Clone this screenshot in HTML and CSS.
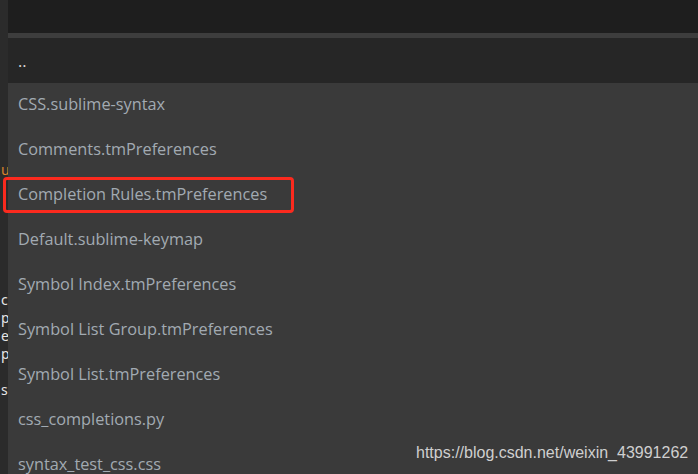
FILE: index.html
```html
<!DOCTYPE html>
<html>
<head>
<meta charset="utf-8">
<link rel="stylesheet" href="styles.css">
</head>
<body>
<div class="app">
  <div class="gutter">
    <div class="g-orange">u</div>
    <div class="g-group">
      <div>c</div>
      <div>p</div>
      <div>e</div>
      <div>p</div>
      <div>&nbsp;</div>
      <div>s</div>
    </div>
  </div>
  <div class="main">
    <div class="topbar"></div>
    <div class="sep"></div>
    <div class="row header">..</div>
    <div class="row">CSS.sublime-syntax</div>
    <div class="row">Comments.tmPreferences</div>
    <div class="row marked">Completion Rules.tmPreferences<span class="mark"></span></div>
    <div class="row">Default.sublime-keymap</div>
    <div class="row">Symbol Index.tmPreferences</div>
    <div class="row">Symbol List Group.tmPreferences</div>
    <div class="row">Symbol List.tmPreferences</div>
    <div class="row">css_completions.py</div>
    <div class="row">syntax_test_css.css</div>
  </div>
</div>
<div class="watermark">https://blog.csdn.net/weixin_43991262</div>
</body>
</html>
```
FILE: styles.css
```css
html, body {
  margin: 0;
  padding: 0;
  background: #3a3a3a;
  overflow: hidden;
}
.app {
  display: flex;
  height: 474px;
}
.gutter {
  width: 8px;
  flex: none;
  background: #2b2b2b;
  overflow: hidden;
  font-family: "Noto Sans", sans-serif;
  font-size: 14px;
  line-height: 18px;
  color: #e6e6e6;
  padding-top: 161px;
  box-sizing: border-box;
}
.g-orange {
  color: #d9822b;
  padding-left: 1px;
}
.g-group {
  margin-top: 112px;
  padding-left: 1px;
}
.main {
  flex: 1;
  display: flex;
  flex-direction: column;
  background: #3a3a3a;
}
.topbar {
  height: 33px;
  background: #1e1e1e;
  flex: none;
}
.sep {
  height: 5px;
  background: #3d3d3d;
  flex: none;
}
.row {
  height: 45px;
  flex: none;
  display: flex;
  align-items: center;
  padding-left: 10px;
  padding-bottom: 3px;
  box-sizing: border-box;
  font-family: "Open Sans", sans-serif;
  font-size: 16.3px;
  color: #a2aab2;
  position: relative;
  white-space: nowrap;
}
.header {
  background: #262626;
  color: #d8d8d8;
  padding-bottom: 0;
}
.mark {
  position: absolute;
  left: -5px;
  top: 4px;
  width: 291px;
  height: 36px;
  border: 3px solid #fb2a1e;
  border-radius: 4px;
  box-sizing: border-box;
}
.watermark {
  position: absolute;
  left: 416px;
  top: 444px;
  font-family: "Liberation Sans", Arial, sans-serif;
  font-size: 16px;
  color: #cfcfcf;
}
```
